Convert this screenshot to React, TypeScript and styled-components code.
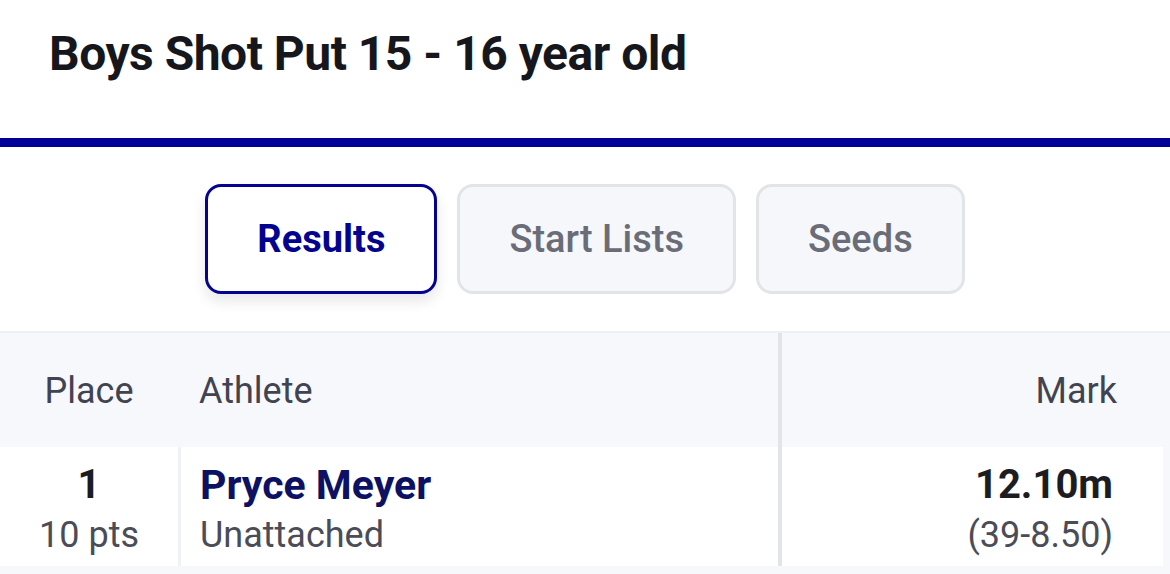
import React from "react";
import styled, { createGlobalStyle } from "styled-components";

const GlobalStyle = createGlobalStyle`
  html, body {
    margin: 0;
    padding: 0;
    background: #ffffff;
    font-family: Roboto, "Noto Sans", "Liberation Sans", sans-serif;
    -webkit-font-smoothing: antialiased;
  }
  * { box-sizing: border-box; }
`;

const Page = styled.div`
  width: 1170px;
  height: 574px;
  overflow: hidden;
  background: #ffffff;
`;

const TitleBar = styled.header`
  padding: 26px 49px 56px;
  border-bottom: 9px solid #000099;
`;

const Title = styled.h1`
  margin: 0;
  font-size: 48px;
  line-height: 56px;
  font-weight: 700;
  letter-spacing: -0.5px;
  color: #16171d;
`;

const Tabs = styled.nav`
  display: flex;
  justify-content: center;
  gap: 20px;
  padding: 37px 0 37px;
`;

const Tab = styled.button<{ $active?: boolean }>`
  height: 110px;
  padding: 0 49px;
  border-radius: 16px;
  font-family: inherit;
  font-size: 38px;
  line-height: 44px;
  font-weight: ${(p) => (p.$active ? 700 : 500)};
  color: ${(p) => (p.$active ? "#03038f" : "#6a6d77")};
  background: ${(p) => (p.$active ? "#ffffff" : "#f6f7fa")};
  border: 3px solid ${(p) => (p.$active ? "#03038f" : "#e3e4e8")};
  box-shadow: ${(p) => (p.$active ? "0 7px 14px rgba(20, 20, 40, 0.10)" : "none")};
  cursor: pointer;
`;

const Table = styled.section`
  background: #f7f8fb;
  border-top: 2px solid #eff0f3;
`;

const Row = styled.div`
  display: grid;
  grid-template-columns: 178px 600px 1fr;
  padding-right: 7px;
`;

const HeadCell = styled.div<{ $align: "left" | "center" | "right"; $divider?: boolean }>`
  padding: 37px ${(p) => (p.$align === "right" ? "46px" : "0")} 35px
    ${(p) => (p.$align === "left" ? "21px" : "0")};
  text-align: ${(p) => p.$align};
  font-size: 36px;
  line-height: 42px;
  font-weight: 400;
  color: #414450;
  border-left: ${(p) => (p.$divider ? "4px solid #e3e4e8" : "none")};
`;

const BodyCell = styled.div<{ $align: "left" | "center" | "right"; $divider?: "strong" | "light" }>`
  background: #ffffff;
  padding: 14px ${(p) => (p.$align === "right" ? "50px" : "0")} 5px
    ${(p) => (p.$align === "left" ? "19px" : "0")};
  text-align: ${(p) => p.$align};
  border-left: ${(p) =>
    p.$divider === "strong"
      ? "4px solid #e3e4e8"
      : p.$divider === "light"
      ? "3px solid #f1f2f5"
      : "none"};
`;

const Primary = styled.div<{ $tone: "ink" | "navy" }>`
  font-size: ${(p) => (p.$tone === "navy" ? "41px" : "40px")};
  line-height: 48px;
  font-weight: 700;
  color: ${(p) => (p.$tone === "navy" ? "#0d1163" : "#1c1d22")};
`;

const Secondary = styled.div`
  font-size: 36px;
  line-height: 52px;
  font-weight: 400;
  color: #4a4c57;
`;

const Filler = styled.div`
  height: 12px;
`;

export default function App() {
  return (
    <Page>
      <GlobalStyle />
      <TitleBar>
        <Title>Boys Shot Put 15 - 16 year old</Title>
      </TitleBar>
      <Tabs>
        <Tab $active>Results</Tab>
        <Tab>Start Lists</Tab>
        <Tab>Seeds</Tab>
      </Tabs>
      <Table>
        <Row>
          <HeadCell $align="center">Place</HeadCell>
          <HeadCell $align="left">Athlete</HeadCell>
          <HeadCell $align="right" $divider>Mark</HeadCell>
        </Row>
        <Row>
          <BodyCell $align="center">
            <Primary $tone="ink">1</Primary>
            <Secondary>10 pts</Secondary>
          </BodyCell>
          <BodyCell $align="left" $divider="light">
            <Primary $tone="navy">Pryce Meyer</Primary>
            <Secondary>Unattached</Secondary>
          </BodyCell>
          <BodyCell $align="right" $divider="strong">
            <Primary $tone="ink">12.10m</Primary>
            <Secondary>(39-8.50)</Secondary>
          </BodyCell>
        </Row>
        <Filler />
      </Table>
    </Page>
  );
}
